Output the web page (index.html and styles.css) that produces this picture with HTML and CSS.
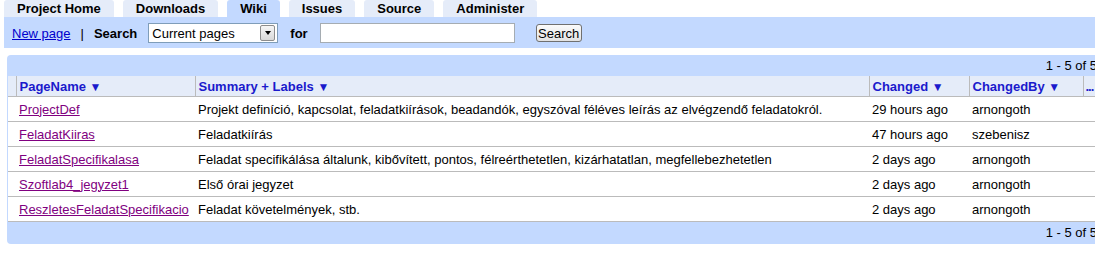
FILE: index.html
```html
<!DOCTYPE html>
<html lang="hu">
<head>
    <meta charset="UTF-8">
    <title>Wiki pages</title>
    <link rel="stylesheet" href="styles.css">
</head>
<body>
    <div class="tabs">
        <a class="tab" href="#">Project Home</a>
        <a class="tab" href="#">Downloads</a>
        <a class="tab active" href="#">Wiki</a>
        <a class="tab" href="#">Issues</a>
        <a class="tab" href="#">Source</a>
        <a class="tab" href="#">Administer</a>
    </div>

    <form class="searchbar">
        <a class="new-page" href="#">New page</a>
        <span class="sep">|</span>
        <span class="label">Search</span>
        <span class="select-box">
            <select class="scope">
                <option>Current pages</option>
                <option>All pages</option>
            </select>
            <span class="select-arrow"><span class="tri"></span></span>
        </span>
        <span class="label label-for">for</span>
        <input class="query" type="text">
        <button class="search-btn" type="button">Search</button>
    </form>

    <div class="results">
        <div class="pagination">1 - 5 of 5</div>
        <table>
            <colgroup>
                <col style="width: 8px">
                <col style="width: 179px">
                <col style="width: 674px">
                <col style="width: 100px">
                <col style="width: 114px">
                <col>
            </colgroup>
            <thead>
                <tr>
                    <th></th>
                    <th>PageName <span class="arrow">&#9660;</span></th>
                    <th>Summary + Labels <span class="arrow">&#9660;</span></th>
                    <th>Changed <span class="arrow">&#9660;</span></th>
                    <th>ChangedBy <span class="arrow">&#9660;</span></th>
                    <th class="more">...</th>
                </tr>
            </thead>
            <tbody>
                <tr>
                    <td></td>
                    <td><a href="#">ProjectDef</a></td>
                    <td>Projekt definíció, kapcsolat, feladatkiírások, beadandók, egyszóval féléves leírás az elvégzendő feladatokról.</td>
                    <td>29 hours ago</td>
                    <td>arnongoth</td>
                    <td></td>
                </tr>
                <tr>
                    <td></td>
                    <td><a href="#">FeladatKiiras</a></td>
                    <td>Feladatkiírás</td>
                    <td>47 hours ago</td>
                    <td>szebenisz</td>
                    <td></td>
                </tr>
                <tr>
                    <td></td>
                    <td><a href="#">FeladatSpecifikalasa</a></td>
                    <td>Feladat specifikálása általunk, kibővített, pontos, félreérthetetlen, kizárhatatlan, megfellebezhetetlen</td>
                    <td>2 days ago</td>
                    <td>arnongoth</td>
                    <td></td>
                </tr>
                <tr>
                    <td></td>
                    <td><a href="#">Szoftlab4_jegyzet1</a></td>
                    <td>Első órai jegyzet</td>
                    <td>2 days ago</td>
                    <td>arnongoth</td>
                    <td></td>
                </tr>
                <tr>
                    <td></td>
                    <td><a href="#">ReszletesFeladatSpecifikacio</a></td>
                    <td>Feladat követelmények, stb.</td>
                    <td>2 days ago</td>
                    <td>arnongoth</td>
                    <td></td>
                </tr>
            </tbody>
        </table>
        <div class="pagination bottom">1 - 5 of 5</div>
    </div>
</body>
</html>
```

FILE: styles.css
```css
body {
    margin: 0;
    overflow: hidden;
    font-family: "Liberation Sans", Arial, sans-serif;
    font-size: 13px;
    color: #000;
    background: #fff;
}
.tabs {
    display: flex;
    gap: 9px;
    padding-left: 4px;
    height: 17px;
}
.tab {
    padding: 0 13px;
    background-color: #e5ecf9;
    color: #000;
    font-weight: bold;
    line-height: 17px;
    text-decoration: none;
    border-radius: 3px 3px 0 0;
}
.tab.active {
    background-color: #c3d9ff;
}
.searchbar {
    display: flex;
    align-items: center;
    margin: 0 0 0 4px;
    padding: 1px 0 0 8px;
    height: 30px;
    background-color: #c3d9ff;
}
.new-page {
    color: #0000cc;
}
.sep {
    margin: 0 10px 0 10px;
}
.label {
    font-weight: bold;
}
.select-box {
    display: flex;
    align-items: center;
    margin-left: 11px;
    width: 128px;
    height: 18px;
    border: 1px solid #7f9db9;
    background: #fff;
}
.scope {
    flex: 1;
    -webkit-appearance: none;
    appearance: none;
    border: none;
    background: transparent;
    font-family: inherit;
    font-size: 13px;
    padding: 0 0 0 3px;
    height: 18px;
    outline: none;
}
.select-arrow {
    display: flex;
    align-items: center;
    justify-content: center;
    width: 13px;
    height: 14px;
    margin-right: 2px;
    border: 1px solid #8d8d8d;
    border-radius: 2px;
    background: linear-gradient(#f6f6f6, #d8d8d8);
}
.tri {
    width: 0;
    height: 0;
    border-left: 3px solid transparent;
    border-right: 3px solid transparent;
    border-top: 4px solid #000;
}
.label-for {
    margin-left: 12px;
}
.query {
    margin-left: 12px;
    width: 191px;
    height: 16px;
    padding: 1px;
    border: 1px solid #a5acb2;
    font-family: inherit;
    font-size: 13px;
}
.search-btn {
    margin-left: 21px;
    width: 46px;
    height: 18px;
    padding: 0;
    font-family: inherit;
    font-size: 13px;
    color: #000;
    background: linear-gradient(#fbfbfb, #e3e3e3);
    border: 1px solid #707070;
    border-radius: 3px;
}
.results {
    margin: 7px -8px 0 7px;
    padding: 0 1px;
    background-color: #c3d9ff;
    border-radius: 4px 0 0 4px;
}
.pagination {
    height: 21px;
    line-height: 21px;
    text-align: right;
    padding-right: 5px;
}
.pagination.bottom {
    height: 22px;
    line-height: 22px;
}
table {
    width: 100%;
    table-layout: fixed;
    border-collapse: collapse;
    background: #fff;
}
th {
    height: 20px;
    padding: 0 3px;
    text-align: left;
    white-space: nowrap;
    overflow: hidden;
    color: #1a1acc;
    background-color: #e5ecf9;
    border-right: 1px solid #bbb;
    border-bottom: 1px solid #bbb;
}
th.more {
    overflow: visible;
    padding: 0 0 0 2px;
    letter-spacing: -1px;
    border-right: none;
}
.arrow {
    font-size: 12px;
}
td {
    height: 24px;
    padding: 0 3px;
    white-space: nowrap;
    overflow: hidden;
    border-bottom: 1px solid #bbb;
}
td a {
    color: #800080;
}
```
